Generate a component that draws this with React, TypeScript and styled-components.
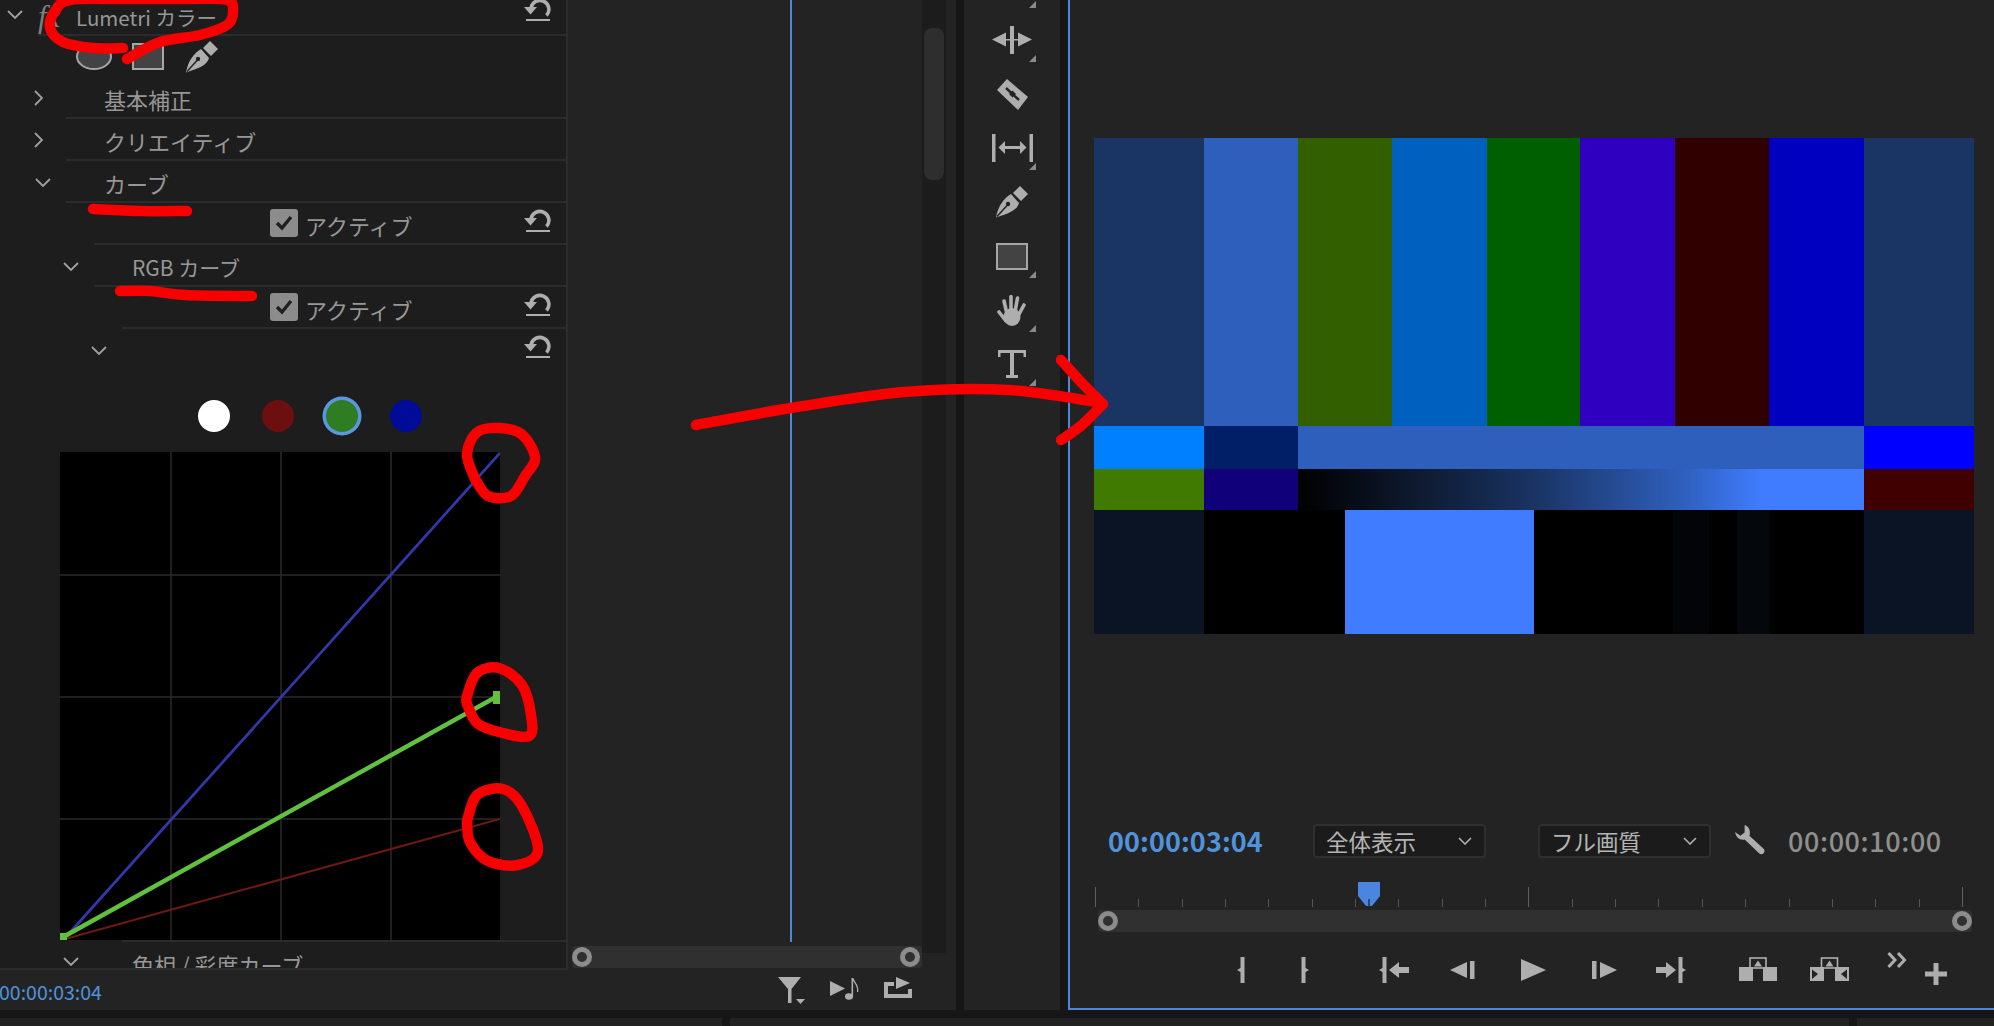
import React from "react";
import styled, { createGlobalStyle } from "styled-components";

const GlobalStyle = createGlobalStyle`
  html, body {
    margin: 0;
    background: #161616;
    overflow: hidden;
  }
  * {
    box-sizing: border-box;
  }
`;

const FONT = `"Noto Sans CJK JP", "Noto Sans", sans-serif`;
const ICON = "#aeaeae";

// 手描きの赤線用: 点列をなめらかな path に変換
const smooth = (pts: number[][]) => {
  let d = `M${pts[0][0]} ${pts[0][1]}`;
  for (let i = 0; i < pts.length - 1; i++) {
    const p0 = pts[i - 1] || pts[i];
    const p1 = pts[i];
    const p2 = pts[i + 1];
    const p3 = pts[i + 2] || p2;
    const c1x = p1[0] + (p2[0] - p0[0]) / 6;
    const c1y = p1[1] + (p2[1] - p0[1]) / 6;
    const c2x = p2[0] - (p3[0] - p1[0]) / 6;
    const c2y = p2[1] - (p3[1] - p1[1]) / 6;
    d += ` C${c1x} ${c1y} ${c2x} ${c2y} ${p2[0]} ${p2[1]}`;
  }
  return d;
};

const SCRIBBLES = [
  [[123, 48], [93, 48], [63, 42], [50, 28], [55, 11], [70, 0], [120, -1], [187, -1], [227, 0], [233, 12], [227, 25], [200, 35], [160, 42], [127, 59]],
  [[93, 209], [140, 211], [187, 211]],
  [[120, 291], [150, 291], [185, 295], [252, 296]],
  [[475, 479], [467, 453], [481, 430], [518, 432], [535, 457], [525, 476], [511, 496], [488, 496], [475, 479]],
  [[467, 704], [467, 696], [477, 673], [499, 668], [522, 685], [531, 715], [529, 736], [499, 732], [477, 723], [467, 704]],
  [[467, 821], [477, 795], [503, 789], [522, 806], [538, 850], [518, 865], [488, 861], [470, 842], [467, 821]],
  [[696, 425], [791, 408], [904, 392], [1008, 390], [1102, 403]],
  [[1061, 360], [1082, 383], [1103, 404]],
  [[1103, 404], [1082, 425], [1061, 440]],
];

const BAR_ROW_1 = [
  [110, "#1a3464"],
  [94, "#2f5fbd"],
  [94, "#325f00"],
  [95, "#0060c0"],
  [93, "#006000"],
  [95, "#3000c0"],
  [94, "#300000"],
  [95, "#0000c0"],
  [110, "#1a3464"],
] as const;
const BAR_ROW_2 = [
  [110, "#0080ff"],
  [94, "#001f66"],
  [566, "#2f5fbd"],
  [110, "#0000ff"],
] as const;
const BAR_ROW_4 = [
  [110, "#0b1424"],
  [141, "#000000"],
  [189, "#407cff"],
  [139, "#000000"],
  [36, "#020407"],
  [28, "#000000"],
  [32, "#04080c"],
  [95, "#000000"],
  [110, "#0b1424"],
] as const;

const Page = styled.div`
  position: relative;
  width: 1994px;
  height: 1026px;
  overflow: hidden;
  display: flex;
  flex-direction: column;
  gap: 8px;
  background: #161616;
  font-family: ${FONT};
`;

const Workspace = styled.div`
  display: flex;
  gap: 8px;
  height: 1010px;
`;

const EditorPanel = styled.section`
  width: 956px;
  flex: none;
  display: flex;
  flex-direction: column;
  background: #232323;
`;

const EditorUpper = styled.div`
  display: flex;
  height: 970px;
`;

const EffectList = styled.div`
  width: 568px;
  height: 970px;
  flex: none;
  overflow: hidden;
  background: #1d1d1d;
  border-right: 2px solid #2c2c2c;
  border-bottom: 2px solid #2c2c2c;
`;

const Row = styled.div<{ $h?: number }>`
  display: flex;
  height: ${(p) => p.$h ?? 42}px;
`;

const ChevronSlot = styled.div<{ $indent: number; $lift?: number; $right?: number }>`
  width: ${(p) => p.$indent}px;
  flex: none;
  display: flex;
  align-items: center;
  justify-content: flex-end;
  padding-right: ${(p) => p.$right ?? 15}px;
  padding-bottom: ${(p) => p.$lift ?? 0}px;
`;

const RowBody = styled.div<{ $pad?: number; $line?: "top" | "none" }>`
  flex: 1;
  display: flex;
  align-items: center;
  padding-left: ${(p) => p.$pad ?? 38}px;
  ${(p) =>
    p.$line === "none"
      ? ""
      : p.$line === "top"
        ? "border-top: 2px solid #2b2b2b;"
        : "border-bottom: 2px solid #2b2b2b;"}
`;

const RowLabel = styled.span<{ $size?: number }>`
  font-size: ${(p) => p.$size ?? 22}px;
  line-height: 28px;
  padding-top: 4px;
  color: #979797;
  white-space: nowrap;
`;

const HeaderLabel = styled(RowLabel)`
  font-size: 20.5px;
  padding-top: 0;
`;

const FxMark = styled.span`
  width: 38px;
  flex: none;
  font-family: "Liberation Serif", serif;
  font-style: italic;
  font-size: 31px;
  line-height: 34px;
  color: #7f7f7f;
`;

const CheckBox = styled.span`
  width: 28px;
  height: 28px;
  flex: none;
  margin-right: 7px;
  border-radius: 3px;
  background: #8c8c8c;
  display: flex;
  align-items: center;
  justify-content: center;
`;

const Glyph = styled.svg<{ $w: number; $h: number; $gap?: number; $top?: number }>`
  width: ${(p) => p.$w}px;
  height: ${(p) => p.$h}px;
  flex: none;
  display: block;
  fill: ${ICON};
  margin-left: ${(p) => p.$gap ?? 0}px;
  margin-top: ${(p) => p.$top ?? 0}px;
`;

const ResetSlot = styled.span<{ $top?: number }>`
  margin-left: auto;
  margin-right: 15px;
  align-self: flex-start;
  margin-top: ${(p) => p.$top ?? 3}px;
`;

const ShapeCircle = styled.span`
  width: 36px;
  height: 27px;
  flex: none;
  border-radius: 50%;
  border: 2px solid #a6a6a6;
  background: #434343;
`;

const ShapeRect = styled.span<{ $w?: number; $gap?: number }>`
  width: ${(p) => p.$w ?? 32}px;
  height: 27px;
  flex: none;
  margin-left: ${(p) => p.$gap ?? 20}px;
  border: 2px solid #a6a6a6;
  background: #434343;
`;

const ChannelRow = styled.div`
  height: 81px;
  padding: 29px 0 0 198px;
  display: flex;
  gap: 32px;
`;

const ChannelDot = styled.span<{ $color: string; $active?: boolean }>`
  width: 32px;
  height: 32px;
  border-radius: 50%;
  background: ${(p) => p.$color};
  box-shadow: ${(p) => (p.$active ? "0 0 0 3.5px #5a97e0" : "none")};
`;

const CurveGraph = styled.div`
  width: 440px;
  height: 488px;
  margin-left: 60px;
  background: #000000;
`;

const CurveSvg = styled.svg`
  display: block;
  width: 100%;
  height: 100%;
`;

const TimelineArea = styled.div`
  flex: 1;
  display: flex;
  align-items: flex-start;
`;

const TimelineColumn = styled.div`
  width: 354px;
  flex: none;
`;

const Lanes = styled.div`
  height: 946px;
  padding-left: 222px;
`;

const Playhead = styled.div`
  width: 2px;
  height: 942px;
  background: #4f86d8;
`;

const ScrollTrack = styled.div<{ $w: number; $left?: number; $top?: number }>`
  position: relative;
  width: ${(p) => p.$w}px;
  height: 22px;
  margin-left: ${(p) => p.$left ?? 0}px;
  margin-top: ${(p) => p.$top ?? 0}px;
  background: #303030;
  border-radius: 4px;
`;

const ScrollHandle = styled.span<{ $end?: number }>`
  position: absolute;
  top: 1px;
  ${(p) => (p.$end !== undefined ? `right: ${p.$end}px;` : "left: 0;")}
  width: 20px;
  height: 20px;
  border-radius: 50%;
  border: 5px solid #8c8c8c;
  background: #303030;
`;

const VerticalScroll = styled.div`
  width: 24px;
  height: 953px;
  flex: none;
  padding: 28px 2px 0;
  background: #1c1c1c;
`;

const VerticalThumb = styled.div`
  height: 152px;
  border-radius: 8px;
  background: #2e2e2e;
`;

const EditorFooter = styled.div`
  height: 40px;
  display: flex;
  align-items: center;
`;

const FooterTime = styled.span`
  margin-left: -1px;
  padding-top: 3px;
  width: 104px;
  flex: none;
  font-size: 19.5px;
  color: #4f93dc;
`;

const FooterIcons = styled.div`
  display: flex;
  align-items: flex-start;
  margin-left: 675px;
  padding-top: 2px;
`;

const ToolPanel = styled.aside`
  width: 96px;
  flex: none;
  overflow: hidden;
  background: #232323;
`;

const ToolStack = styled.div`
  margin-top: -41px;
  display: flex;
  flex-direction: column;
`;

const ToolSlot = styled.div`
  position: relative;
  height: 54px;
  display: flex;
  align-items: center;
  justify-content: center;
`;

const ToolCorner = styled.span`
  position: absolute;
  right: 24px;
  bottom: 5px;
  width: 0;
  height: 0;
  border-left: 7px solid transparent;
  border-bottom: 7px solid #8a8a8a;
`;

const ProgramPanel = styled.section`
  flex: 1;
  height: 1010px;
  padding: 138px 0 0 24px;
  background: #232323;
  border-left: 2px solid #4f86d8;
  border-bottom: 2px solid #4f86d8;
`;

const BarChart = styled.div`
  width: 880px;
  display: flex;
  flex-direction: column;
`;

const BarRow = styled.div<{ $h: number }>`
  display: flex;
  height: ${(p) => p.$h}px;
`;

const BarCell = styled.div<{ $w: number; $c: string }>`
  width: ${(p) => p.$w}px;
  flex: none;
  background: ${(p) => p.$c};
`;

const RampCell = styled.div`
  flex: 1;
  background: linear-gradient(
    90deg,
    #000000 0%,
    #0b1424 16%,
    #1a3464 42%,
    #2f5fbd 68%,
    #407cff 82%,
    #407cff 100%
  );
`;

const ControlRow = styled.div`
  display: flex;
  align-items: center;
  height: 34px;
  margin: 190px 0 0 14px;
`;

const TimeCode = styled.span<{ $blue?: boolean; $w: number; $gap?: number }>`
  width: ${(p) => p.$w}px;
  flex: none;
  margin-left: ${(p) => p.$gap ?? 0}px;
  font-size: 27px;
  line-height: 34px;
  font-weight: ${(p) => (p.$blue ? 700 : 500)};
  letter-spacing: ${(p) => (p.$blue ? 0.1 : 0.6)}px;
  white-space: nowrap;
  color: ${(p) => (p.$blue ? "#4f93dc" : "#8f8f8f")};
`;

const Dropdown = styled.div<{ $gap: number }>`
  width: 173px;
  height: 34px;
  flex: none;
  margin-left: ${(p) => p.$gap}px;
  padding: 0 12px 0 11px;
  display: flex;
  align-items: center;
  justify-content: space-between;
  border: 2px solid #2f2f2f;
  border-radius: 4px;
  background: #1b1b1b;
  font-size: 22.5px;
  color: #b4b4b4;
`;

const Ruler = styled.div`
  position: relative;
  width: 868px;
  height: 20px;
  margin: 29px 0 0 1px;
  display: flex;
  align-items: flex-end;
  justify-content: space-between;
`;

const Tick = styled.span<{ $major?: boolean }>`
  width: 1px;
  height: ${(p) => (p.$major ? 20 : 8)}px;
  background: ${(p) => (p.$major ? "#5f5f5f" : "#555555")};
`;

const PlayMarker = styled.svg`
  position: absolute;
  left: 263px;
  top: -5px;
  width: 22px;
  height: 24px;
`;

const TransportBar = styled.div`
  display: flex;
  align-items: flex-start;
  margin: 20px 0 0 143px;
`;

const BottomRow = styled.div`
  flex: 1;
  display: flex;
  gap: 8px;
`;

const BottomPanel = styled.div<{ $w?: number }>`
  ${(p) => (p.$w ? `width: ${p.$w}px; flex: none;` : "flex: 1;")}
  background: #222222;
`;

const Annotation = styled.svg`
  position: absolute;
  left: 0;
  top: 0;
  width: 1994px;
  height: 1026px;
  pointer-events: none;
  fill: none;
  stroke: #f80000;
  stroke-width: 10.5;
  stroke-linecap: round;
  stroke-linejoin: round;
`;

const ChevronRightMark = styled.svg`
  margin-right: 8px;
`;

const ChevronDown = () => (
  <svg width="16" height="9" viewBox="0 0 16 9" fill="none" stroke="#a0a0a0" strokeWidth="1.8">
    <polyline points="1,1 8,8 15,1" />
  </svg>
);

const ChevronRight = () => (
  <ChevronRightMark width="9" height="16" viewBox="0 0 9 16" fill="none" stroke="#a0a0a0" strokeWidth="1.8">
    <polyline points="1,1 8,8 1,15" />
  </ChevronRightMark>
);

const SmallChevron = () => (
  <svg width="14" height="8" viewBox="0 0 14 8" fill="none" stroke="#b0b0b0" strokeWidth="1.6">
    <polyline points="1,1 7,7 13,1" />
  </svg>
);

const ResetIcon = ({ top }: { top?: number }) => (
  <ResetSlot $top={top}>
    <Glyph $w={27} $h={27} viewBox="0 0 27 27">
      <path d="M7 13A9 9 0 1 1 22.5 20.5" fill="none" stroke={ICON} strokeWidth="3.6" />
      <polygon points="0,12 13,12 6.5,19.5" />
      <rect x="2" y="24" width="24" height="2" />
    </Glyph>
  </ResetSlot>
);

const CheckField = ({ label }: { label: string }) => (
  <>
    <CheckBox>
      <svg width="18" height="16" viewBox="0 0 18 16" fill="none" stroke="#1f1f1f" strokeWidth="3.4">
        <polyline points="2,8 7,13 16,2" />
      </svg>
    </CheckBox>
    <RowLabel>{label}</RowLabel>
  </>
);

const PenIcon = ({ gap }: { gap?: number }) => (
  <Glyph $w={32} $h={32} $gap={gap} viewBox="0 0 32 32">
    <polygon points="17,7 24,0 32,8 25,15" />
    <path d="M15 8L23 17C21 24 14 27 0 31.5C2 20 8 12 15 8Z" />
    <path d="M1 30.5L11 19.5" stroke="#232323" strokeWidth="1.5" />
    <circle cx="12" cy="18" r="2.2" fill="#232323" />
  </Glyph>
);

const RippleIcon = () => (
  <Glyph $w={40} $h={28} viewBox="0 0 40 28">
    <rect x="18" y="0" width="4" height="28" />
    <polygon points="0,13.5 14,6.5 14,20.5" />
    <polygon points="40,13.5 26,6.5 26,20.5" />
    <rect x="14" y="13" width="12" height="1.5" />
  </Glyph>
);

const RazorIcon = () => (
  <Glyph $w={31} $h={31} viewBox="0 0 31 31">
    <polygon points="10,0 31,18 21,31 0,11" />
    <path d="M9 9L22 21" stroke="#232323" strokeWidth="2.4" />
    <polygon points="15.5,11.5 19,15 15.5,18.5 12,15" fill="#232323" />
  </Glyph>
);

const SlipIcon = () => (
  <Glyph $w={41} $h={28} viewBox="0 0 41 28">
    <rect x="0" y="0" width="3.5" height="28" />
    <rect x="37.5" y="0" width="3.5" height="28" />
    <rect x="10" y="12" width="21" height="3" />
    <polygon points="6.5,13.5 13,7 13,20" />
    <polygon points="34.5,13.5 28,7 28,20" />
  </Glyph>
);

const HandIcon = () => (
  <Glyph $w={30} $h={32} viewBox="0 0 30 32">
    <ellipse cx="15" cy="23" rx="8.5" ry="9" />
    <g stroke={ICON} strokeWidth="3.6" strokeLinecap="round">
      <line x1="10" y1="20" x2="7" y2="7" />
      <line x1="14" y1="18" x2="14" y2="2.5" />
      <line x1="18" y1="18" x2="20.5" y2="4" />
      <line x1="21" y1="22" x2="27" y2="11" />
      <line x1="9" y1="27" x2="2" y2="18" />
    </g>
  </Glyph>
);

const TypeIcon = () => (
  <Glyph $w={28} $h={28} viewBox="0 0 28 28">
    <rect x="0" y="0" width="28" height="3" />
    <rect x="0" y="0" width="2.5" height="7" />
    <rect x="25.5" y="0" width="2.5" height="7" />
    <rect x="12" y="0" width="4" height="28" />
    <rect x="8" y="25" width="12" height="3" />
  </Glyph>
);

const FilterIcon = () => (
  <Glyph $w={28} $h={28} viewBox="0 0 28 28">
    <polygon points="0,0 23,0 13.5,12 13.5,26 10,26 10,12" />
    <polygon points="18,22 27,22 22.5,27" />
  </Glyph>
);

const PlayNoteIcon = () => (
  <Glyph $w={30} $h={22} $gap={24} $top={1} viewBox="0 0 30 22">
    <polygon points="0,3 15,10.5 0,18" />
    <ellipse cx="19" cy="18.5" rx="4" ry="3.3" />
    <rect x="21.5" y="0" width="1.6" height="18" />
    <path d="M23 0.5C24 5 29 7 27.5 14" fill="none" stroke={ICON} strokeWidth="1.3" />
  </Glyph>
);

const ExportIcon = () => (
  <Glyph $w={28} $h={21} $gap={24} viewBox="0 0 28 21">
    <path d="M0 5H10V9H4V17H24V12H28V21H0Z" />
    <polygon points="12,0 26,6 12,12" />
  </Glyph>
);

const WrenchIcon = () => (
  <Glyph $w={31} $h={30} $gap={24} $top={-3} viewBox="0 0 29 28">
    <path d="M9 0C13 1 15 6 13.5 10L27 22.5C29 25.5 25.5 29 22.5 26.5L9 13.5C5 14.5 1 12 0 6.5L5 10L9 7Z" />
  </Glyph>
);

const BraceOpen = ({ gap }: { gap?: number }) => (
  <Glyph $w={8} $h={26} $gap={gap} $top={5} viewBox="0 0 8 26">
    <path d="M3.5 0H7.5V26H3.5V15L0 13L3.5 11Z" />
  </Glyph>
);

const BraceClose = ({ gap }: { gap: number }) => (
  <Glyph $w={8} $h={26} $gap={gap} $top={5} viewBox="0 0 8 26">
    <path d="M0.5 0H4.5V11L8 13L4.5 15V26H0.5Z" />
  </Glyph>
);

const GoInIcon = ({ gap }: { gap: number }) => (
  <Glyph $w={30} $h={26} $gap={gap} $top={5} viewBox="0 0 30 26">
    <path d="M3.5 0H7.5V26H3.5V15L0 13L3.5 11Z" />
    <polygon points="10,13 20,5 20,10 30,10 30,16 20,16 20,21" />
  </Glyph>
);

const GoOutIcon = ({ gap }: { gap: number }) => (
  <Glyph $w={30} $h={26} $gap={gap} $top={5} viewBox="0 0 30 26">
    <path d="M22.5 0H26.5V11L30 13L26.5 15V26H22.5Z" />
    <polygon points="20,13 10,5 10,10 0,10 0,16 10,16 10,21" />
  </Glyph>
);

const StepBackIcon = ({ gap }: { gap: number }) => (
  <Glyph $w={25} $h={26} $gap={gap} $top={5} viewBox="0 0 25 26">
    <polygon points="0,13 17,5 17,21" />
    <rect x="20" y="4" width="4.5" height="18" />
  </Glyph>
);

const PlayIcon = ({ gap }: { gap: number }) => (
  <Glyph $w={25} $h={26} $gap={gap} $top={5} viewBox="0 0 25 26">
    <polygon points="0,2 25,13 0,24" />
  </Glyph>
);

const StepForwardIcon = ({ gap }: { gap: number }) => (
  <Glyph $w={26} $h={26} $gap={gap} $top={5} viewBox="0 0 26 26">
    <rect x="0" y="4" width="4.5" height="18" />
    <polygon points="8,5 25,13 8,21" />
  </Glyph>
);

const LiftIcon = ({ gap }: { gap: number }) => (
  <Glyph $w={38} $h={24} $gap={gap} $top={5} viewBox="0 0 38 24">
    <rect x="0" y="10" width="14" height="14" />
    <rect x="24" y="10" width="14" height="14" />
    <rect x="11" y="1" width="16" height="10" fill="none" stroke={ICON} strokeWidth="1.6" />
    <polygon points="15,9.5 23,9.5 19,3.5" />
  </Glyph>
);

const ExtractIcon = ({ gap }: { gap: number }) => (
  <Glyph $w={39} $h={24} $gap={gap} $top={5} viewBox="0 0 39 24">
    <rect x="0" y="10" width="14" height="14" />
    <rect x="25" y="10" width="14" height="14" />
    <rect x="11.5" y="1" width="16" height="10" fill="none" stroke={ICON} strokeWidth="1.6" />
    <polygon points="15.5,9.5 23.5,9.5 19.5,3.5" />
    <polygon points="2,12.5 2,22 8,17" fill="#232323" />
    <polygon points="37,12.5 37,22 31,17" fill="#232323" />
  </Glyph>
);

const MoreIcon = ({ gap }: { gap: number }) => (
  <Glyph $w={20} $h={16} $gap={gap} viewBox="0 0 20 16">
    <polyline points="1.5,1 8,8 1.5,15" stroke={ICON} strokeWidth="3" fill="none" />
    <polyline points="11,1 17.5,8 11,15" stroke={ICON} strokeWidth="3" fill="none" />
  </Glyph>
);

const PlusIcon = ({ gap }: { gap: number }) => (
  <Glyph $w={22} $h={22} $gap={gap} $top={11} viewBox="0 0 22 22">
    <rect x="8.5" y="0" width="5" height="22" />
    <rect x="0" y="8.5" width="22" height="5" />
  </Glyph>
);

const App = () => {
  // 20 分割の目盛り、10 ごとに長い線
  const ticks = Array.from({ length: 21 }, (_, i) => i % 10 === 0);

  return (
    <Page>
      <GlobalStyle />
      <Workspace>
        <EditorPanel>
          <EditorUpper>
            <EffectList>
              <Row $h={36}>
                <ChevronSlot $indent={38} $lift={8}>
                  <ChevronDown />
                </ChevronSlot>
                <RowBody $pad={0}>
                  <FxMark>fx</FxMark>
                  <HeaderLabel>Lumetri カラー</HeaderLabel>
                  <ResetIcon top={-5} />
                </RowBody>
              </Row>
              <Row $h={41}>
                <ChevronSlot $indent={38} />
                <RowBody $line="none">
                  <ShapeCircle />
                  <ShapeRect />
                  <PenIcon gap={22} />
                </RowBody>
              </Row>
              <Row>
                <ChevronSlot $indent={66}>
                  <ChevronRight />
                </ChevronSlot>
                <RowBody>
                  <RowLabel>基本補正</RowLabel>
                </RowBody>
              </Row>
              <Row>
                <ChevronSlot $indent={66}>
                  <ChevronRight />
                </ChevronSlot>
                <RowBody>
                  <RowLabel>クリエイティブ</RowLabel>
                </RowBody>
              </Row>
              <Row>
                <ChevronSlot $indent={66}>
                  <ChevronDown />
                </ChevronSlot>
                <RowBody>
                  <RowLabel>カーブ</RowLabel>
                </RowBody>
              </Row>
              <Row>
                <ChevronSlot $indent={94} />
                <RowBody $pad={176}>
                  <CheckField label="アクティブ" />
                  <ResetIcon />
                </RowBody>
              </Row>
              <Row>
                <ChevronSlot $indent={94}>
                  <ChevronDown />
                </ChevronSlot>
                <RowBody>
                  <RowLabel $size={21}>RGB カーブ</RowLabel>
                </RowBody>
              </Row>
              <Row>
                <ChevronSlot $indent={122} />
                <RowBody $pad={148}>
                  <CheckField label="アクティブ" />
                  <ResetIcon />
                </RowBody>
              </Row>
              <Row>
                <ChevronSlot $indent={122}>
                  <ChevronDown />
                </ChevronSlot>
                <RowBody $line="none">
                  <ResetIcon />
                </RowBody>
              </Row>
              <ChannelRow>
                <ChannelDot $color="#ffffff" />
                <ChannelDot $color="#6e0f0f" />
                <ChannelDot $color="#2e7d22" $active />
                <ChannelDot $color="#000c98" />
              </ChannelRow>
              <CurveGraph>
                <CurveSvg viewBox="0 0 440 488">
                  <g stroke="#2a2a2a" strokeWidth="1.5">
                    <line x1="111" y1="0" x2="111" y2="488" />
                    <line x1="221" y1="0" x2="221" y2="488" />
                    <line x1="331" y1="0" x2="331" y2="488" />
                    <line x1="0" y1="123" x2="440" y2="123" />
                    <line x1="0" y1="245" x2="440" y2="245" />
                    <line x1="0" y1="367" x2="440" y2="367" />
                  </g>
                  <line x1="5" y1="486" x2="440" y2="1" stroke="#3437a8" strokeWidth="2.8" />
                  <line x1="5" y1="487" x2="440" y2="367" stroke="#6e1a14" strokeWidth="2" />
                  <line x1="5" y1="484" x2="436" y2="245" stroke="#62c03f" strokeWidth="4.4" />
                  <rect x="0" y="481" width="7" height="7" fill="#62c03f" />
                  <rect x="433" y="239" width="7" height="13" fill="#62c03f" />
                </CurveSvg>
              </CurveGraph>
              <Row>
                <ChevronSlot $indent={122} $right={43}>
                  <ChevronDown />
                </ChevronSlot>
                <RowBody $pad={10} $line="top">
                  <RowLabel>色相 / 彩度カーブ</RowLabel>
                </RowBody>
              </Row>
            </EffectList>
            <TimelineArea>
              <TimelineColumn>
                <Lanes>
                  <Playhead />
                </Lanes>
                <ScrollTrack $w={350} $left={4}>
                  <ScrollHandle />
                  <ScrollHandle $end={2} />
                </ScrollTrack>
              </TimelineColumn>
              <VerticalScroll>
                <VerticalThumb />
              </VerticalScroll>
            </TimelineArea>
          </EditorUpper>
          <EditorFooter>
            <FooterTime>00:00:03:04</FooterTime>
            <FooterIcons>
              <FilterIcon />
              <PlayNoteIcon />
              <ExportIcon />
            </FooterIcons>
          </EditorFooter>
        </EditorPanel>

        <ToolPanel>
          <ToolStack>
            <ToolSlot>
              <ToolCorner />
            </ToolSlot>
            <ToolSlot>
              <RippleIcon />
              <ToolCorner />
            </ToolSlot>
            <ToolSlot>
              <RazorIcon />
            </ToolSlot>
            <ToolSlot>
              <SlipIcon />
              <ToolCorner />
            </ToolSlot>
            <ToolSlot>
              <PenIcon />
            </ToolSlot>
            <ToolSlot>
              <ShapeRect $gap={0} />
              <ToolCorner />
            </ToolSlot>
            <ToolSlot>
              <HandIcon />
              <ToolCorner />
            </ToolSlot>
            <ToolSlot>
              <TypeIcon />
              <ToolCorner />
            </ToolSlot>
          </ToolStack>
        </ToolPanel>

        <ProgramPanel>
          <BarChart>
            <BarRow $h={288}>
              {BAR_ROW_1.map(([w, c], i) => (
                <BarCell key={i} $w={w} $c={c} />
              ))}
            </BarRow>
            <BarRow $h={43}>
              {BAR_ROW_2.map(([w, c], i) => (
                <BarCell key={i} $w={w} $c={c} />
              ))}
            </BarRow>
            <BarRow $h={41}>
              <BarCell $w={110} $c="#407a00" />
              <BarCell $w={94} $c="#10007a" />
              <RampCell />
              <BarCell $w={110} $c="#400000" />
            </BarRow>
            <BarRow $h={124}>
              {BAR_ROW_4.map(([w, c], i) => (
                <BarCell key={i} $w={w} $c={c} />
              ))}
            </BarRow>
          </BarChart>

          <ControlRow>
            <TimeCode $blue $w={153}>00:00:03:04</TimeCode>
            <Dropdown $gap={52}>
              全体表示
              <SmallChevron />
            </Dropdown>
            <Dropdown $gap={52}>
              フル画質
              <SmallChevron />
            </Dropdown>
            <WrenchIcon />
            <TimeCode $w={152} $gap={22}>00:00:10:00</TimeCode>
          </ControlRow>

          <Ruler>
            {ticks.map((major, i) => (
              <Tick key={i} $major={major} />
            ))}
            <PlayMarker viewBox="0 0 22 24">
              <path d="M0 0H22V14L14 24H8L0 14Z" fill="#4a86e0" />
              <line x1="11" y1="17" x2="11" y2="24" stroke="#1d1d1d" strokeWidth="1.2" />
            </PlayMarker>
          </Ruler>

          <ScrollTrack $w={874} $left={4} $top={3}>
            <ScrollHandle />
            <ScrollHandle $end={0} />
          </ScrollTrack>

          <TransportBar>
            <BraceOpen />
            <BraceClose gap={56} />
            <GoInIcon gap={70} />
            <StepBackIcon gap={41} />
            <PlayIcon gap={46} />
            <StepForwardIcon gap={46} />
            <GoOutIcon gap={38} />
            <LiftIcon gap={53} />
            <ExtractIcon gap={33} />
            <MoreIcon gap={38} />
            <PlusIcon gap={18} />
          </TransportBar>
        </ProgramPanel>
      </Workspace>

      <BottomRow>
        <BottomPanel $w={722} />
        <BottomPanel $w={1119} />
        <BottomPanel />
      </BottomRow>

      <Annotation viewBox="0 0 1994 1026">
        {SCRIBBLES.map((pts, i) => (
          <path key={i} d={smooth(pts)} />
        ))}
      </Annotation>
    </Page>
  );
};

export default App;
